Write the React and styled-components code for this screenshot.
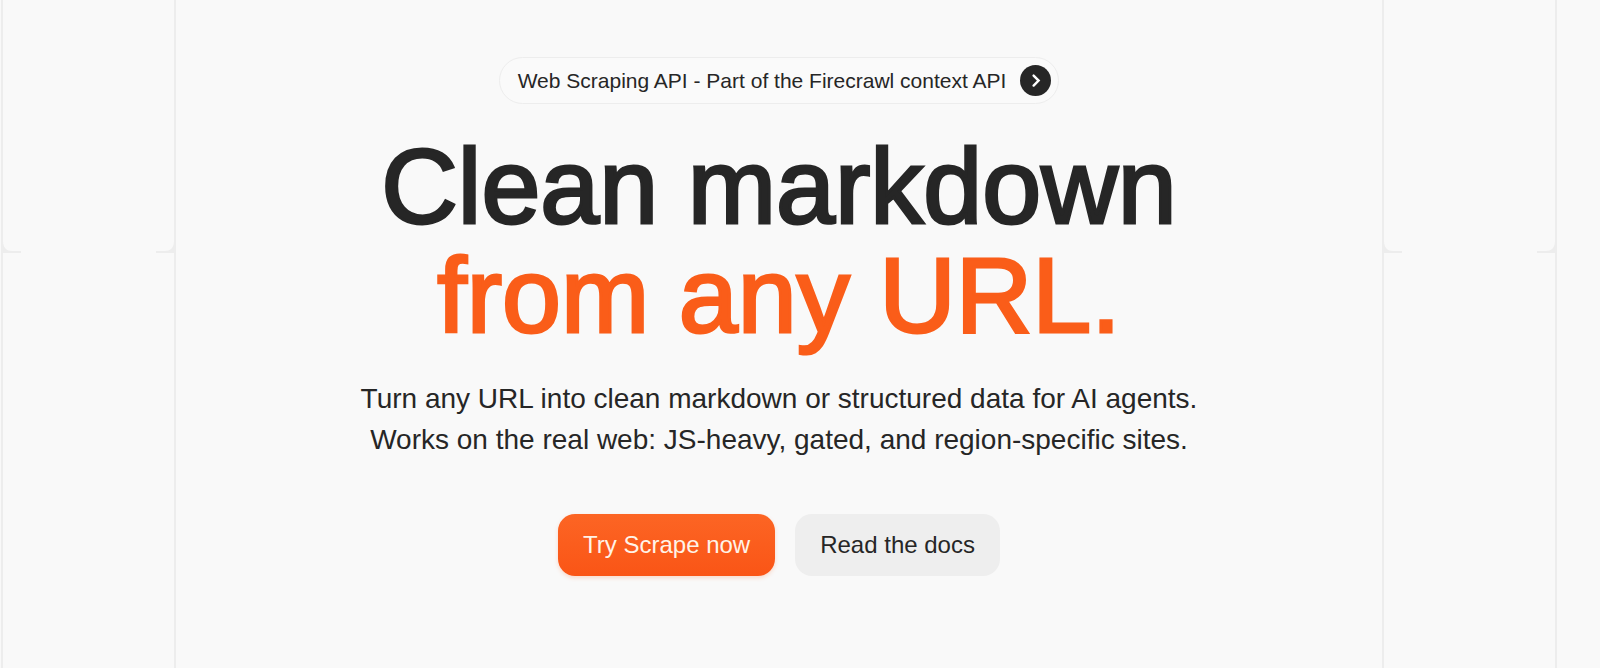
import React from "react";
import styled, { createGlobalStyle } from "styled-components";

const Global = createGlobalStyle`
  *, *::before, *::after { box-sizing: border-box; }
  body { margin: 0; background: #f9f9f9; color: #262626; font-family: "Liberation Sans", Arial, sans-serif; }
`;
const line = "#ededed";

const Page = styled.div`
  display: grid;
  grid-template-columns: 175px minmax(0, 1fr) 175px;
  min-height: 100vh;
  padding: 0 43px 0 1px;
`;
const Rail = styled.div`
  display: grid;
  grid-template-rows: 253px 1fr;
  border-left: 2px solid ${line};
  border-right: 2px solid ${line};
`;
const Cell = styled.div`
  display: flex;
  align-items: flex-end;
  justify-content: space-between;
`;
const Corner = styled.svg`
  width: 18px;
  height: 12px;
  fill: ${line};
`;
const Hero = styled.main`
  display: flex;
  flex-direction: column;
  align-items: center;
  padding: 57px 16px 64px;
  text-align: center;
`;
const Badge = styled.a`
  display: flex;
  align-items: center;
  gap: 14px;
  height: 47px;
  padding: 0 7px 0 18px;
  border: 1px solid ${line};
  border-radius: 24px;
  background: #fafafa;
  color: inherit;
  text-decoration: none;
  font-size: 21px;
`;
const Dot = styled.svg`
  width: 31px;
  height: 31px;
`;
const Title = styled.h1`
  margin: 28px 0 0;
  font-size: 106px;
  font-weight: 400;
  line-height: 109px;
  -webkit-text-stroke: 3px currentColor;
`;
const Accent = styled.span`
  display: block;
  color: #fa5d19;
`;
const Lead = styled.p`
  margin: 28px 0 0;
  font-size: 28px;
  line-height: 41px;
`;
const Actions = styled.div`
  display: flex;
  gap: 20px;
  margin-top: 54px;
`;
const Button = styled.button`
  height: 62px;
  padding: 0 25px;
  border: 0;
  border-radius: 17px;
  font: 24px "Liberation Sans", Arial, sans-serif;
  background: ${(p) => (p.$primary ? "linear-gradient(#fc6524, #fa5516)" : "#eeeeee")};
  color: ${(p) => (p.$primary ? "#fff3e8" : "#262626")};
  box-shadow: ${(p) => (p.$primary ? "0 2px 4px rgba(250, 93, 25, 0.2)" : "none")};
`;

function Side() {
  return (
    <Rail aria-hidden="true">
      <Cell>
        <Corner viewBox="0 0 18 12"><path d="M0 0C0 7 4 10 9 10H18V12H0Z" /></Corner>
        <Corner viewBox="0 0 18 12"><path d="M18 0C18 7 14 10 9 10H0V12H18Z" /></Corner>
      </Cell>
    </Rail>
  );
}

export default function App() {
  return (
    <>
      <Global />
      <Page>
        <Side />
        <Hero>
          <Badge href="#api">
            <span>Web Scraping API - Part of the Firecrawl context API</span>
            <Dot viewBox="0 0 31 31" aria-hidden="true">
              <circle cx="15.5" cy="15.5" r="15.5" fill="#262626" />
              <path d="M13.6 10.6l5 5-5 5" fill="none" stroke="#fff" strokeWidth="2.4" strokeLinecap="round" />
            </Dot>
          </Badge>
          <Title>Clean markdown<Accent>from any URL.</Accent></Title>
          <Lead>Turn any URL into clean markdown or structured data for AI agents.<br />Works on the real web: JS-heavy, gated, and region-specific sites.</Lead>
          <Actions><Button $primary>Try Scrape now</Button><Button>Read the docs</Button></Actions>
        </Hero>
        <Side />
      </Page>
    </>
  );
}
